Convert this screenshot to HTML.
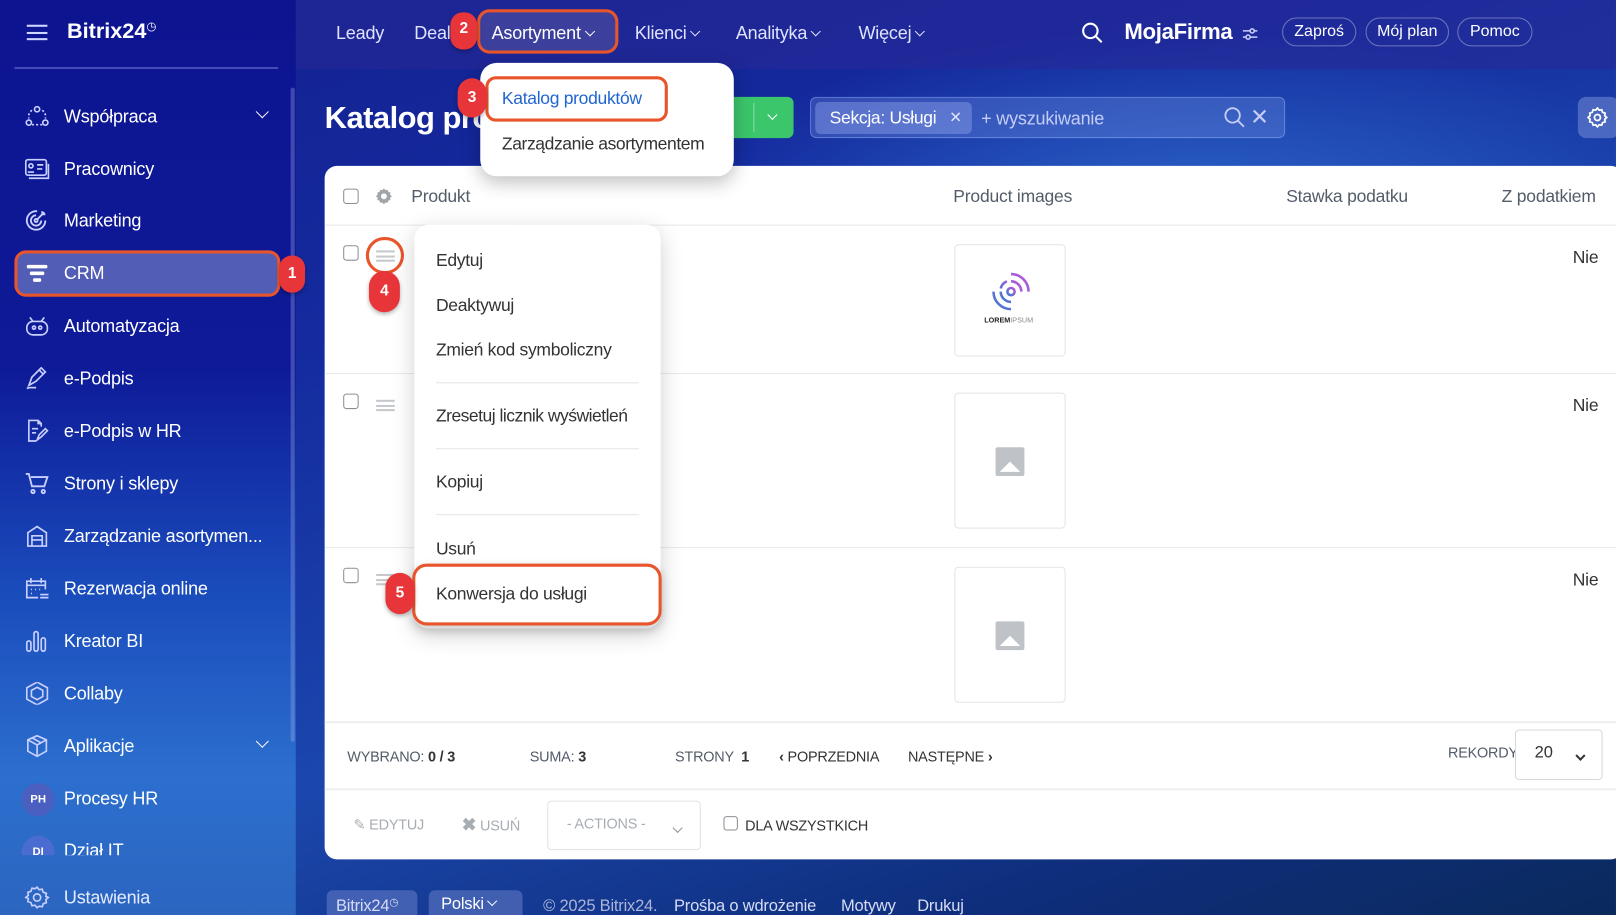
<!DOCTYPE html>
<html><head><meta charset="utf-8"><style>
*{box-sizing:border-box;margin:0;padding:0}
html,body{width:1616px;height:915px;overflow:hidden;font-family:"Liberation Sans",sans-serif}
#w{position:absolute;left:0;top:0;width:1568px;height:888px;transform:scale(1.0306,1.0304);transform-origin:0 0;overflow:hidden;
background:radial-gradient(ellipse 700px 260px at 1150px 210px,rgba(60,140,230,.55),transparent 70%),linear-gradient(160deg,#13208f 0%,#142a9e 30%,#1b47ad 60%,#0e2d7a 85%,#0a2a5c 100%)}
.a{position:absolute;white-space:nowrap}
#side{position:absolute;left:0;top:0;width:287px;height:888px;background:linear-gradient(180deg,#0d1490 0%,#0e1a98 40%,#1a4cbc 65%,#2c6fce 85%,#2b65c0 100%)}
.nav{position:absolute;left:62px;color:#fff;font-size:17.5px;letter-spacing:-.2px}
.ic{position:absolute;left:24px;width:24px;height:22px}
#top{position:absolute;left:287px;top:0;width:1281px;height:67px;background:rgba(40,40,150,.55)}
.tn{position:absolute;top:22px;color:#dfe3ff;font-size:17.5px;letter-spacing:-.2px}
.pill{position:absolute;top:17px;height:28px;border:1px solid rgba(255,255,255,.35);border-radius:14px;color:#fff;font-size:15.5px;line-height:26px;text-align:center}
.badge{position:absolute;background:#e8353a;color:#fff;font-weight:bold;font-size:15px;text-align:center;border-radius:12px;box-shadow:0 2px 4px rgba(0,0,0,.3)}
.ob{position:absolute;border:3px solid #e8552b;border-radius:12px}
.g{color:#535c69;font-size:17px;letter-spacing:-.2px}
.cb{position:absolute;width:15px;height:15px;border:1.5px solid #8a8f96;border-radius:3px;background:#fff}
.hb{position:absolute;width:18px;height:11px;border-top:2px solid #c5c8cc;border-bottom:2px solid #c5c8cc}
.hb:after{content:"";position:absolute;left:0;right:0;top:2.5px;height:2px;background:#c5c8cc}
.img{position:absolute;left:926px;width:108px;border:1px solid #e2e4e7;border-radius:4px;background:#fff}
.ph{position:absolute;left:39px;width:28px;height:28px;background:#bfc3c8;border-radius:2px}
.mi{position:absolute;left:423px;color:#333;font-size:17px;letter-spacing:-.3px}
.dv{position:absolute;left:423px;width:197px;height:1px;background:#e3e5e8}
.ft{position:absolute;font-size:14px;color:#535c69;letter-spacing:-.2px}
.bt{position:absolute;top:871px;color:#d6dcf5;font-size:16px;letter-spacing:-.2px}
.chev{display:inline-block;width:7px;height:7px;border-right:1.5px solid currentColor;border-bottom:1.5px solid currentColor;transform:rotate(45deg);margin-left:5px;position:relative;top:-4px}
</style></head><body><div id="w">

<div id="side">
 <div class="a" style="left:26px;top:24px;width:20px;height:15px;border-top:2px solid #cfd6ff;border-bottom:2px solid #cfd6ff"></div>
 <div class="a" style="left:26px;top:30.5px;width:20px;height:2px;background:#cfd6ff"></div>
 <div class="a" style="left:65px;top:19px;color:#fff;font-size:21px;font-weight:bold">Bitrix24<span style="font-size:11px;vertical-align:top;font-weight:normal">&#9719;</span></div>
 <div class="a" style="left:14px;top:65px;width:256px;height:2px;background:rgba(120,130,220,.5)"></div>
 <div class="a" style="left:282px;top:85px;width:4px;height:635px;background:rgba(160,170,230,.35);border-radius:2px"></div>

 <div class="a" style="left:14px;top:243px;width:258px;height:45px;background:rgba(120,130,200,.65);border:3px solid #e8552b;border-radius:11px"></div>
 <div class="badge" style="left:271px;top:248px;width:25px;height:36px;line-height:36px">1</div>

 <svg class="ic" style="top:102px" viewBox="0 0 24 22" fill="none" stroke="#c9d0ff" stroke-width="1.6"><circle cx="12" cy="4" r="2.5"/><circle cx="4" cy="17" r="2.5"/><circle cx="20" cy="17" r="2.5"/><path d="M7 5 Q3 8 4 13M17 5q4 3 3 8M7 19h10" stroke-dasharray="2 2"/></svg>
 <div class="nav" style="top:103px">Współpraca</div>
 <div class="a" style="left:245px;top:104px;color:#fff"><span class="chev" style="width:9px;height:9px"></span></div>
 <svg class="ic" style="top:153px" viewBox="0 0 24 22" fill="none" stroke="#c9d0ff" stroke-width="1.6"><rect x="1" y="2" width="20" height="15" rx="2"/><circle cx="6" cy="8" r="2"/><path d="M3 14h6M12 7h6M12 11h5M4 20h19V6"/></svg>
 <div class="nav" style="top:154px">Pracownicy</div>
 <svg class="ic" style="top:203px" viewBox="0 0 24 22" fill="none" stroke="#c9d0ff" stroke-width="1.8"><path d="M20 11a9 9 0 1 1-8-9"/><path d="M16 11a5 5 0 1 1-5-5"/><circle cx="11" cy="11" r="1.5"/><path d="M12 10l7-7M17 2v3h3"/></svg>
 <div class="nav" style="top:204px">Marketing</div>
 <svg class="ic" style="top:254px" viewBox="0 0 24 22" fill="#fff"><rect x="2" y="3" width="20" height="3.5" rx="1.5"/><rect x="5" y="9.5" width="14" height="3.5" rx="1.5"/><rect x="8" y="16" width="8" height="3.5" rx="1.5"/></svg>
 <div class="nav" style="top:255px">CRM</div>
 <svg class="ic" style="top:305px" viewBox="0 0 24 22" fill="none" stroke="#c9d0ff" stroke-width="1.6"><rect x="2" y="7" width="20" height="13" rx="6"/><path d="M5 3l3 4M19 3l-3 4"/><circle cx="9" cy="13" r="1.5"/><circle cx="15" cy="13" r="1.5"/></svg>
 <div class="nav" style="top:306px">Automatyzacja</div>
 <svg class="ic" style="top:356px" viewBox="0 0 24 22" fill="none" stroke="#c9d0ff" stroke-width="1.6"><path d="M4 18l3-8 9-9 4 4-9 9-7 4zM14 3l4 4M2 21c4-2 6 0 9-1"/></svg>
 <div class="nav" style="top:357px">e-Podpis</div>
 <svg class="ic" style="top:407px" viewBox="0 0 24 22" fill="none" stroke="#c9d0ff" stroke-width="1.6"><path d="M16 7V4l-3-3H4v20h7M13 1v3h3M7 9h6M7 13h4"/><path d="M12 20l2-5 6-6 2 2-6 6z"/></svg>
 <div class="nav" style="top:408px">e-Podpis w HR</div>
 <svg class="ic" style="top:458px" viewBox="0 0 24 22" fill="none" stroke="#c9d0ff" stroke-width="1.8"><path d="M1 2h3l3 12h12l3-9H6"/><circle cx="8" cy="19" r="1.6"/><circle cx="18" cy="19" r="1.6"/></svg>
 <div class="nav" style="top:459px">Strony i sklepy</div>
 <svg class="ic" style="top:509px" viewBox="0 0 24 22" fill="none" stroke="#c9d0ff" stroke-width="1.6"><path d="M3 21V8l9-6 9 6v13zM7 21V11h10v10M7 15h10"/></svg>
 <div class="nav" style="top:510px">Zarządzanie asortymen...</div>
 <svg class="ic" style="top:560px" viewBox="0 0 24 22" fill="none" stroke="#c9d0ff" stroke-width="1.6"><path d="M13 20H2V4h18v8M2 8h18M6 1v5M16 1v5M6 12h1M10 12h1M14 12h1M6 16h1M15 17h8M15 20h8"/></svg>
 <div class="nav" style="top:561px">Rezerwacja online</div>
 <svg class="ic" style="top:611px" viewBox="0 0 24 22" fill="none" stroke="#c9d0ff" stroke-width="1.6"><rect x="2" y="11" width="4" height="10" rx="2"/><rect x="9" y="2" width="4" height="19" rx="2"/><rect x="16" y="8" width="4" height="13" rx="2"/></svg>
 <div class="nav" style="top:612px">Kreator BI</div>
 <svg class="ic" style="top:662px" viewBox="0 0 24 22" fill="none" stroke="#c9d0ff" stroke-width="1.6"><path d="M12 0l10 5.5v11L12 22 2 16.5v-11z"/><path d="M12 5l5.5 3v6L12 17l-5.5-3V8z"/></svg>
 <div class="nav" style="top:663px">Collaby</div>
 <svg class="ic" style="top:713px" viewBox="0 0 24 22" fill="none" stroke="#c9d0ff" stroke-width="1.6"><path d="M12 1l9 4v11l-9 5-9-5V5zM3 5l9 5 9-5M12 10v11M7 3l9 5"/></svg>
 <div class="nav" style="top:714px">Aplikacje</div>
 <div class="a" style="left:245px;top:715px;color:#fff"><span class="chev" style="width:9px;height:9px"></span></div>
 <div class="a" style="left:21px;top:760px;width:32px;height:32px;border-radius:16px;background:#4a5fc0;color:#fff;font-size:11px;font-weight:bold;text-align:center;line-height:32px">PH</div>
 <div class="nav" style="top:765px">Procesy HR</div>
 <div class="a" style="left:0;top:810px;width:282px;height:20px;overflow:hidden">
  <div class="a" style="left:21px;top:1px;width:32px;height:32px;border-radius:16px;background:#4a6cd0;color:#fff;font-size:11px;font-weight:bold;text-align:center;line-height:32px">DI</div>
  <div class="nav" style="top:5px">Dział IT</div>
 </div>
 <svg class="ic" style="top:860px" viewBox="0 0 24 22" fill="none" stroke="#c9d0ff" stroke-width="1.6"><circle cx="12" cy="11" r="3.5"/><path d="M12 1l2 2.5 3-.5 1 3 3 1-.5 3L23 11l-2.5 2 .5 3-3 1-1 3-3-.5L12 21l-2-2.5-3 .5-1-3-3-1 .5-3L1 11l2.5-2-.5-3 3-1 1-3 3 .5z"/></svg>
 <div class="nav" style="top:861px;color:#e6ecff">Ustawienia</div>
</div>

<div id="top"></div>
<div class="tn" style="left:326px">Leady</div>
<div class="tn" style="left:402px">Deal</div>
<div class="ob" style="left:463px;top:9px;width:137px;height:43px;background:#3c3f9c"></div>
<div class="tn" style="left:477px;color:#fff">Asortyment<span class="chev"></span></div>
<div class="badge" style="left:437px;top:12px;width:26px;height:36px;line-height:32px">2</div>
<div class="tn" style="left:616px">Klienci<span class="chev"></span></div>
<div class="tn" style="left:714px">Analityka<span class="chev"></span></div>
<div class="tn" style="left:833px">Więcej<span class="chev"></span></div>
<svg class="a" style="left:1049px;top:21px" width="22" height="22" viewBox="0 0 22 22" fill="none" stroke="#fff" stroke-width="2"><circle cx="9" cy="9" r="7"/><path d="M14 14l6 6"/></svg>
<div class="a" style="left:1091px;top:19px;color:#fff;font-size:21.5px;font-weight:bold;letter-spacing:-.3px">MojaFirma</div>
<svg class="a" style="left:1205px;top:26px" width="16" height="14" viewBox="0 0 16 14" fill="none" stroke="#c9d0ff" stroke-width="1.5"><path d="M1 4h14M1 10h14"/><circle cx="10" cy="4" r="2" fill="#2a2f90"/><circle cx="6" cy="10" r="2" fill="#2a2f90"/></svg>
<div class="pill" style="left:1244px;width:72px">Zaproś</div>
<div class="pill" style="left:1325px;width:81px">Mój plan</div>
<div class="pill" style="left:1414px;width:73px">Pomoc</div>

<div class="a" style="left:315px;top:98px;color:#fff;font-size:30px;font-weight:bold;letter-spacing:-.5px">Katalog produktów</div>
<div class="a" style="left:690px;top:94px;width:80px;height:40px;background:#3bc66b;border-radius:6px"></div>
<div class="a" style="left:731px;top:100px;width:1px;height:28px;background:rgba(255,255,255,.4)"></div>
<div class="a" style="left:741px;top:106px;color:#fff"><span class="chev"></span></div>

<div class="a" style="left:786px;top:94px;width:461px;height:40px;background:rgba(120,150,230,.3);border:1px solid rgba(160,190,255,.4);border-radius:6px"></div>
<div class="a" style="left:791px;top:99px;width:152px;height:31px;background:rgba(150,170,240,.4);border-radius:5px"></div>
<div class="a" style="left:805px;top:105px;color:#fff;font-size:17px;letter-spacing:-.3px">Sekcja: Usługi</div>
<div class="a" style="left:921px;top:105px;color:#dfe4ff;font-size:15px">&#10005;</div>
<div class="a" style="left:952px;top:105px;color:#c5cdf5;font-size:17.5px;letter-spacing:-.2px">+ wyszukiwanie</div>
<svg class="a" style="left:1187px;top:103px" width="22" height="22" viewBox="0 0 22 22" fill="none" stroke="#c5cdf5" stroke-width="1.8"><circle cx="9" cy="9" r="7"/><path d="M14 14l6 6"/></svg>
<div class="a" style="left:1213px;top:101px;color:#c5cdf5;font-size:22px">&#10005;</div>
<div class="a" style="left:1531px;top:94px;width:40px;height:40px;background:rgba(150,170,230,.4);border-radius:8px"></div>
<svg class="a" style="left:1540px;top:104px" width="20" height="20" viewBox="0 0 24 24" fill="none" stroke="#fff" stroke-width="2"><circle cx="12" cy="12" r="3.5"/><path d="M12 1l2 2.5 3-.5 1 3 3 1-.5 3L23 12l-2.5 2 .5 3-3 1-1 3-3-.5L12 23l-2-2.5-3 .5-1-3-3-1 .5-3L1 12l2.5-2-.5-3 3-1 1-3 3 .5z"/></svg>

<div class="a" style="left:315px;top:161px;width:1260px;height:673px;background:#fff;border-radius:12px"></div>
<div class="cb" style="left:333px;top:183px"></div>
<svg class="a" style="left:364px;top:182px" width="17" height="17" viewBox="0 0 24 24" fill="#a0a5ab"><path d="M12 1l2 2.5 3-.5 1 3 3 1-.5 3L23 12l-2.5 2 .5 3-3 1-1 3-3-.5L12 23l-2-2.5-3 .5-1-3-3-1 .5-3L1 12l2.5-2-.5-3 3-1 1-3 3 .5z"/><circle cx="12" cy="12" r="4" fill="#fff"/></svg>
<div class="a g" style="left:399px;top:181px">Produkt</div>
<div class="a g" style="left:925px;top:181px">Product images</div>
<div class="a g" style="left:1248px;top:181px">Stawka podatku</div>
<div class="a g" style="left:1457px;top:181px">Z podatkiem</div>
<div class="a" style="left:315px;top:218px;width:1253px;height:1px;background:#e7e9ec"></div>
<div class="a" style="left:315px;top:362px;width:1253px;height:1px;background:#e7e9ec"></div>
<div class="a" style="left:315px;top:531px;width:1253px;height:1px;background:#e7e9ec"></div>
<div class="a" style="left:315px;top:700px;width:1253px;height:2px;background:#eceef0"></div>
<div class="a" style="left:315px;top:765px;width:1253px;height:2px;background:#eceef0"></div>

<div class="cb" style="left:333px;top:238px"></div>
<div class="cb" style="left:333px;top:382px"></div>
<div class="cb" style="left:333px;top:551px"></div>
<div class="hb" style="left:365px;top:243px"></div>
<div class="hb" style="left:365px;top:388px"></div>
<div class="hb" style="left:365px;top:557px"></div>
<div class="a" style="left:355px;top:230px;width:37px;height:36px;border:3px solid #e8552b;border-radius:18px"></div>
<div class="badge" style="left:358px;top:263px;width:30px;height:40px;line-height:40px;border-radius:15px">4</div>

<div class="img" style="top:237px;height:109px">
 <svg class="a" style="left:33px;top:24px" width="42" height="42" viewBox="0 0 42 42" fill="none" stroke-width="2.5"><defs><linearGradient id="lg" x1="0" y1="1" x2="1" y2="0"><stop offset="0" stop-color="#3a7bd5"/><stop offset="1" stop-color="#c056d8"/></linearGradient></defs><g stroke="url(#lg)"><path d="M21 4a17 17 0 0 1 17 17M21 38A17 17 0 0 1 4 21"/><path d="M21 11a10 10 0 0 1 10 10M21 31a10 10 0 0 1-10-10M11 18a10 10 0 0 1 6-7"/><circle cx="21" cy="21" r="3.5"/></g></svg>
 <div class="a" style="left:28px;top:70px;font-size:7px;color:#222;font-weight:bold">LOREM<span style="font-weight:normal;color:#888">IPSUM</span></div>
</div>
<div class="img" style="top:381px;height:132px"><div class="ph" style="top:52px"></div><div class="a" style="left:43px;top:66px;border-left:10px solid transparent;border-right:10px solid transparent;border-bottom:10px solid #fff"></div></div>
<div class="img" style="top:550px;height:132px"><div class="ph" style="top:52px"></div><div class="a" style="left:43px;top:66px;border-left:10px solid transparent;border-right:10px solid transparent;border-bottom:10px solid #fff"></div></div>
<div class="a g" style="left:1526px;top:240px;color:#333">Nie</div>
<div class="a g" style="left:1526px;top:384px;color:#333">Nie</div>
<div class="a g" style="left:1526px;top:553px;color:#333">Nie</div>

<div class="ft" style="left:337px;top:726px">WYBRANO: <b style="color:#333">0 / 3</b></div>
<div class="ft" style="left:514px;top:726px">SUMA: <b style="color:#333">3</b></div>
<div class="ft" style="left:655px;top:726px">STRONY &nbsp;<b style="color:#333">1</b></div>
<div class="ft" style="left:756px;top:726px;color:#333"><b>&#8249;</b> POPRZEDNIA</div>
<div class="ft" style="left:881px;top:726px;color:#333">NASTĘPNE <b>&#8250;</b></div>
<div class="ft" style="left:1405px;top:722px">REKORDY:</div>
<div class="a" style="left:1470px;top:708px;width:85px;height:49px;border:1px solid #d5d8dc;border-radius:4px;background:#fff"></div>
<div class="a" style="left:1489px;top:722px;font-size:16px;color:#333">20</div>
<div class="a" style="left:1525px;top:728px;color:#333"><span class="chev" style="border-width:2px"></span></div>

<div class="ft" style="left:343px;top:792px;color:#a8adb4">&#9998; EDYTUJ</div>
<div class="ft" style="left:448px;top:791px;color:#a8adb4"><b style="font-size:17px">&#10006;</b> USUŃ</div>
<div class="a" style="left:531px;top:777px;width:149px;height:48px;border:1px solid #e1e3e6;border-radius:4px"></div>
<div class="ft" style="left:550px;top:791px;color:#a8adb4">- ACTIONS -</div>
<div class="a" style="left:649px;top:798px;color:#8a8f96"><span class="chev"></span></div>
<div class="cb" style="left:702px;top:792px;width:14px;height:14px"></div>
<div class="ft" style="left:723px;top:793px;color:#333">DLA WSZYSTKICH</div>

<div class="a" style="left:466px;top:61px;width:246px;height:110px;background:#fff;border-radius:16px;box-shadow:0 6px 18px rgba(0,0,0,.25)"></div>
<div class="ob" style="left:471px;top:74px;width:177px;height:44px;border-radius:10px"></div>
<div class="a" style="left:487px;top:86px;color:#2066d0;font-size:17px;letter-spacing:-.3px">Katalog produktów</div>
<div class="a" style="left:487px;top:130px;color:#333;font-size:17px;letter-spacing:-.4px">Zarządzanie asortymentem</div>
<div class="badge" style="left:444px;top:76px;width:28px;height:38px;line-height:38px;border-radius:14px">3</div>

<div class="a" style="left:402px;top:218px;width:239px;height:392px;background:#fff;border-radius:14px;box-shadow:0 6px 22px rgba(0,0,0,.18)"></div>
<div class="mi" style="top:243px">Edytuj</div>
<div class="mi" style="top:287px">Deaktywuj</div>
<div class="mi" style="top:330px">Zmień kod symboliczny</div>
<div class="dv" style="top:371px"></div>
<div class="mi" style="top:394px;letter-spacing:-.5px">Zresetuj licznik wyświetleń</div>
<div class="dv" style="top:435px"></div>
<div class="mi" style="top:458px">Kopiuj</div>
<div class="dv" style="top:499px"></div>
<div class="mi" style="top:523px">Usuń</div>
<div class="ob" style="left:400px;top:547px;width:242px;height:60px;border-radius:14px;box-shadow:0 4px 10px rgba(0,0,0,.2)"></div>
<div class="mi" style="top:567px">Konwersja do usługi</div>
<div class="badge" style="left:374px;top:556px;width:28px;height:40px;line-height:40px;border-radius:14px">5</div>

<div class="a" style="left:317px;top:864px;width:88px;height:30px;background:rgba(120,140,210,.45);border-radius:6px"></div>
<div class="bt" style="left:326px">Bitrix24<span style="font-size:10px;vertical-align:top">&#9719;</span></div>
<div class="a" style="left:416px;top:864px;width:91px;height:30px;background:rgba(120,140,210,.45);border-radius:6px"></div>
<div class="bt" style="left:428px;color:#fff;top:869px">Polski<span class="chev"></span></div>
<div class="bt" style="left:527px;color:#aab4d8">© 2025 Bitrix24.</div>
<div class="bt" style="left:654px">Prośba o wdrożenie</div>
<div class="bt" style="left:816px">Motywy</div>
<div class="bt" style="left:890px">Drukuj</div>
</div></body></html>
